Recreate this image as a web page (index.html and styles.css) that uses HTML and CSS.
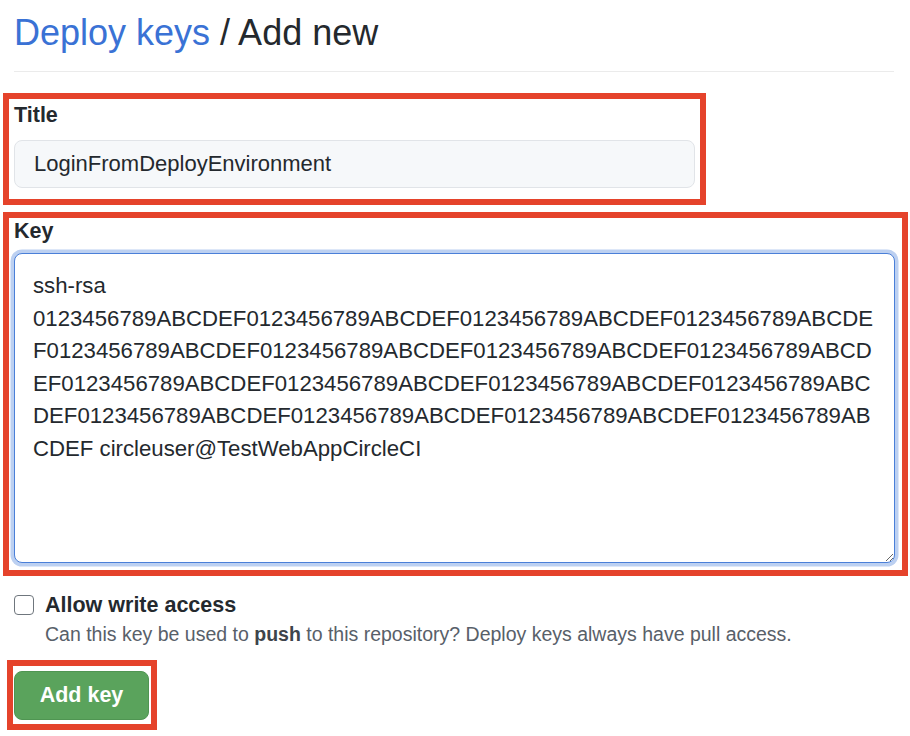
FILE: index.html
```html
<!DOCTYPE html>
<html lang="en">
<head>
<meta charset="utf-8">
<title>Deploy keys / Add new</title>
<link rel="stylesheet" href="styles.css">
</head>
<body>
<main class="page">
  <h1 class="heading"><a class="heading-link" href="#">Deploy keys</a> / Add new</h1>

  <div class="mark mark-title">
    <label class="field-label" for="title">Title</label>
    <input class="text-input" id="title" type="text" value="LoginFromDeployEnvironment">
  </div>

  <div class="mark mark-key">
    <label class="field-label" for="key">Key</label>
    <textarea class="key-area" id="key" spellcheck="false">ssh-rsa
0123456789ABCDEF0123456789ABCDEF0123456789ABCDEF0123456789ABCDE
F0123456789ABCDEF0123456789ABCDEF0123456789ABCDEF0123456789ABCD
EF0123456789ABCDEF0123456789ABCDEF0123456789ABCDEF0123456789ABC
DEF0123456789ABCDEF0123456789ABCDEF0123456789ABCDEF0123456789AB
CDEF circleuser@TestWebAppCircleCI</textarea>
  </div>

  <div class="check-row">
    <input class="check-box" id="write" type="checkbox">
    <div class="check-text">
      <label class="check-label" for="write">Allow write access</label>
      <p class="check-note">Can this key be used to <strong>push</strong> to this repository? Deploy keys always have pull access.</p>
    </div>
  </div>

  <div class="mark mark-btn">
    <button class="add-btn" type="button">Add key</button>
  </div>
</main>
</body>
</html>
```

FILE: styles.css
```css
* { box-sizing: border-box; }

html, body {
  margin: 0;
  padding: 0;
  background: #ffffff;
}

body {
  font-family: "Liberation Sans", Arial, sans-serif;
  color: #24292e;
}

.page {
  width: 894px;
  padding: 12px 0 0 14px;
}

.heading {
  margin: 0;
  width: 880px;
  font-size: 36px;
  line-height: 42px;
  font-weight: 400;
  color: #24292e;
  padding-bottom: 17px;
  border-bottom: 1px solid #ebebeb;
}

.heading-link {
  color: #3a72d5;
  text-decoration: none;
}

.mark {
  border: 6px solid #e5432b;
}

.mark-title {
  margin: 21px 0 0 -11px;
  width: 703px;
  padding: 3px 5px 11px 5px;
}

.mark-key {
  margin: 7px 0 0 -11px;
  width: 905px;
  padding: 0 5px 7px 5px;
}

.field-label {
  display: block;
  font-weight: 700;
  font-size: 21.5px;
  line-height: 26px;
}

.text-input {
  display: block;
  margin-top: 12px;
  width: 681px;
  height: 48px;
  padding: 0 19px;
  font-family: "Liberation Sans", Arial, sans-serif;
  font-size: 22px;
  color: #24292e;
  background: #f6f8fa;
  border: 1px solid #e1e4e8;
  border-radius: 8px;
  outline: none;
}

.key-area {
  display: block;
  margin-top: 9px;
  width: 881px;
  height: 310px;
  padding: 16px 18px;
  font-family: "Liberation Sans", Arial, sans-serif;
  font-size: 22.2px;
  line-height: 32.5px;
  color: #24292e;
  background: #ffffff;
  border: 1.5px solid #4a7fd8;
  border-radius: 8px;
  box-shadow: 0 0 0 3.5px #bcd0f1;
  outline: none;
  overflow: hidden;
}

.check-row {
  display: flex;
  align-items: flex-start;
  gap: 11px;
  margin-top: 16px;
}

.check-box {
  appearance: none;
  -webkit-appearance: none;
  margin: 3px 0 0 0;
  width: 20px;
  height: 20px;
  border: 1.5px solid #6f767d;
  border-radius: 4px;
  background: #ffffff;
  flex: none;
}

.check-text {
  display: flex;
  flex-direction: column;
}

.check-label {
  font-weight: 700;
  font-size: 21.5px;
  line-height: 26px;
}

.check-note {
  margin: 2px 0 0 0;
  font-size: 19.5px;
  line-height: 28px;
  color: #586069;
}

.check-note strong {
  color: #3d444b;
}

.mark-btn {
  display: inline-block;
  margin: 12px 0 0 -7px;
  padding: 5px 2px 4px 1px;
}

.add-btn {
  display: block;
  width: 135px;
  height: 49px;
  font-family: "Liberation Sans", Arial, sans-serif;
  font-size: 21.5px;
  font-weight: 700;
  color: #ffffff;
  background: #5aa35c;
  border: 1px solid #4f9552;
  border-radius: 8px;
  cursor: pointer;
}
```
